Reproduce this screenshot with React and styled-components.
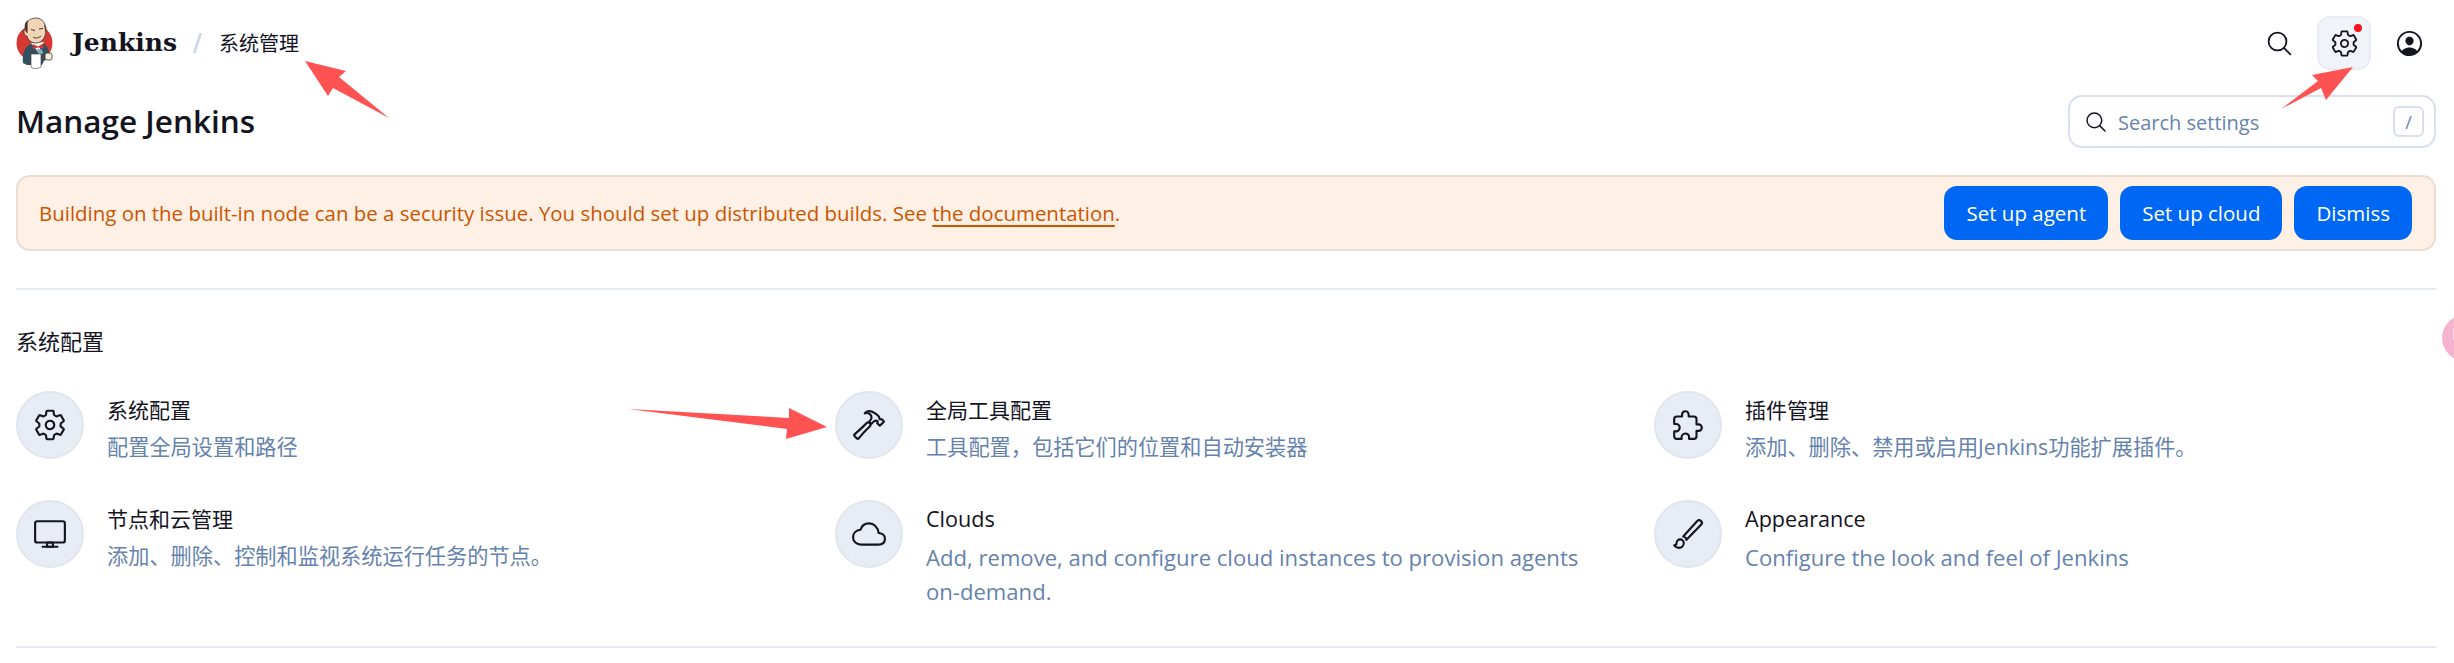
import React from 'react'
import styled, { createGlobalStyle } from 'styled-components'
import {
    IoSearchOutline,
    IoSettingsOutline,
    IoHammerOutline,
    IoCloudOutline,
    IoExtensionPuzzleOutline,
    IoBrushOutline,
    IoPersonCircleOutline
} from 'react-icons/io5'

const sans = `'Open Sans', 'Noto Sans CJK SC', sans-serif`

const GlobalStyle = createGlobalStyle`
    html, body {
        margin: 0;
        background: #ffffff;
        font-family: ${sans};
        color: #14141f;
    }
`

// the io5 desktop icon comes out filled here, so it is drawn by hand
function DesktopIcon({ size }) {
    return (
        <svg width={size} height={size} viewBox="0 0 512 512" fill="none" stroke="currentColor" strokeWidth="32" strokeLinejoin="round" strokeLinecap="round">
            <rect x="32" y="64" width="448" height="320" rx="32" ry="32" />
            <polygon points="304,448 296,384 216,384 208,448" />
            <line x1="368" y1="448" x2="144" y2="448" />
        </svg>
    )
}

const items = [
    { icon: IoSettingsOutline, title: '系统配置', text: '配置全局设置和路径' },
    { icon: IoHammerOutline, title: '全局工具配置', text: '工具配置，包括它们的位置和自动安装器' },
    { icon: IoExtensionPuzzleOutline, title: '插件管理', text: '添加、删除、禁用或启用Jenkins功能扩展插件。' },
    { icon: DesktopIcon, title: '节点和云管理', text: '添加、删除、控制和监视系统运行任务的节点。' },
    { icon: IoCloudOutline, latin: true, title: 'Clouds', text: 'Add, remove, and configure cloud instances to provision agents on-demand.' },
    { icon: IoBrushOutline, latin: true, title: 'Appearance', text: 'Configure the look and feel of Jenkins' }
]

function JenkinsLogo() {
    return (
        <svg width="38" height="52" viewBox="16 16 38 52">
            <circle cx="34.5" cy="42" r="18" fill="#d33833" />
            <path d="M23 62C22 52 25 45 31 43L44 43C48 46 50 50 49 56L44 60L42 64L27 64Z" fill="#335061" />
            <path d="M31 42L44 41L38 51Z" fill="#ffffff" />
            <path d="M26 24C27 19 32 17 36 17C42 17 46 22 46 29C46 36 42 42 36 42C31 42 28 39 27 35C24 35 23 30 25 28Z" fill="#f0d6b7" stroke="#49312a" strokeWidth="0.8" />
            <path d="M25 28C24 24 25 21 28 19C27 23 28 27 27.500 32C26 32 25.500 30 25 28Z" fill="#49312a" />
            <path d="M44 23C46 26 46.500 29 46 32C45 30 44.500 27 44 23Z" fill="#49312a" />
            <path d="M31 28.500L35 29.500M39 28L43 27.500M33 36C35 37.500 38 37.500 41 35" fill="none" stroke="#49312a" strokeWidth="1" />
            <path d="M33 43L38 45.500L43 42.500L43.500 47.500L38 46.500L33 48Z" fill="#d33833" />
            <path d="M37 48L42 48.500L43 52L39 55Z" fill="#81b0c4" />
            <path d="M31 53L41 53L41 66C38 68 33 68 31 66Z" fill="#ffffff" stroke="#49312a" strokeWidth="0.6" />
            <rect x="45" y="52" width="7" height="7" rx="2" fill="#f4ebdd" stroke="#49312a" strokeWidth="0.8" />
        </svg>
    )
}

function Arrows() {
    return (
        <ArrowLayer viewBox="0 0 2454 663">
            <polygon points="305,61 346,71 339,77 389,118 333,88 328,96" fill="#ff5252" />
            <polygon points="2353,67 2326,100 2321,88 2281,109 2318,81 2312,75" fill="#ff5252" />
            <polygon points="827,427 786,439 787,429 628,409 789,418 789,408" fill="#ff5252" />
        </ArrowLayer>
    )
}

export default function App() {
    return (
        <Page>
            <GlobalStyle />
            <TopBar>
                <Brand>
                    <JenkinsLogo />
                    <BrandName>Jenkins</BrandName>
                    <Slash />
                    <Crumb>系统管理</Crumb>
                </Brand>
                <TopActions>
                    <TopButton>
                        <IoSearchOutline size={29} />
                    </TopButton>
                    <TopButton $active>
                        <IoSettingsOutline size={29} />
                        <RedDot />
                    </TopButton>
                    <TopButton>
                        <IoPersonCircleOutline size={31} />
                    </TopButton>
                </TopActions>
            </TopBar>

            <HeaderRow>
                <Heading>Manage Jenkins</Heading>
                <SearchBox>
                    <IoSearchOutline size={24} color="#14141f" />
                    <SearchText>Search settings</SearchText>
                    <KeyHint>/</KeyHint>
                </SearchBox>
            </HeaderRow>

            <Banner>
                <BannerText>
                    Building on the built-in node can be a security issue. You should set up distributed builds. See <BannerLink>the documentation</BannerLink>.
                </BannerText>
                <BannerButtons>
                    <PrimaryButton>Set up agent</PrimaryButton>
                    <PrimaryButton>Set up cloud</PrimaryButton>
                    <PrimaryButton>Dismiss</PrimaryButton>
                </BannerButtons>
            </Banner>

            <Divider />

            <SectionTitle>系统配置</SectionTitle>
            <ItemGrid>
                {items.map((item) => (
                    <Item key={item.title}>
                        <IconCircle>
                            <item.icon size={34} />
                        </IconCircle>
                        <ItemBody>
                            <ItemTitle $latin={item.latin}>{item.title}</ItemTitle>
                            <ItemText $latin={item.latin}>{item.text}</ItemText>
                        </ItemBody>
                    </Item>
                ))}
            </ItemGrid>

            <BottomDivider />
            <PinkBubble />
            <Arrows />
        </Page>
    )
}

const Page = styled.div`
    position: relative;
    height: 663px;
    padding: 16px 18px 0 16px;
    box-sizing: border-box;
    overflow: hidden;
`
const TopBar = styled.div`
    display: flex;
    align-items: center;
    justify-content: space-between;
    height: 54px;
`
const Brand = styled.div`
    display: flex;
    align-items: center;
`
const BrandName = styled.span`
    font-family: 'DejaVu Serif', serif;
    font-weight: 700;
    font-size: 25px;
    margin: 0 0 2px 18px;
`
const Slash = styled.span`
    width: 3px;
    height: 20px;
    margin: 0 20px 0 19px;
    background: #d0d9ea;
    transform: skewX(-18deg);
`
const Crumb = styled.span`
    font-size: 20px;
    margin-bottom: 2px;
`
const TopActions = styled.div`
    display: flex;
    align-items: center;
    gap: 11px;
`
const TopButton = styled.div`
    position: relative;
    display: flex;
    align-items: center;
    justify-content: center;
    width: 54px;
    height: 54px;
    box-sizing: border-box;
    border-radius: 13px;
    background: ${(p) => (p.$active ? '#f0f3f8' : 'transparent')};
    border: 2px solid ${(p) => (p.$active ? '#e9ecf3' : 'transparent')};
`
const RedDot = styled.span`
    position: absolute;
    top: 6px;
    right: 7px;
    width: 8px;
    height: 8px;
    border-radius: 50%;
    background: #f5141e;
`
const HeaderRow = styled.div`
    display: flex;
    align-items: center;
    justify-content: space-between;
    margin-top: 25px;
    height: 53px;
`
const Heading = styled.h1`
    margin: 0 0 2px;
    font-size: 31.5px;
    font-weight: 600;
    color: #14141f;
`
const SearchBox = styled.div`
    display: flex;
    align-items: center;
    box-sizing: border-box;
    width: 368px;
    height: 53px;
    padding: 0 10px 0 14px;
    border: 2px solid #d8dfee;
    border-radius: 14px;
`
const SearchText = styled.span`
    flex: 1;
    margin-left: 10px;
    padding-top: 1px;
    font-size: 20px;
    color: #6583ae;
`
const KeyHint = styled.span`
    display: flex;
    align-items: center;
    justify-content: center;
    box-sizing: border-box;
    width: 31px;
    height: 31px;
    border: 2px solid #d8dfee;
    border-radius: 6px;
    font-size: 18px;
    color: #6583ae;
`
const Banner = styled.div`
    display: flex;
    align-items: center;
    justify-content: space-between;
    box-sizing: border-box;
    height: 76px;
    margin-top: 27px;
    padding: 0 22px 0 21px;
    background: #fff0e6;
    border: 2px solid #eaddd3;
    border-radius: 14px;
`
const BannerText = styled.span`
    font-size: 20.45px;
    color: #cc5500;
`
const BannerLink = styled.span`
    text-decoration: underline;
    text-underline-offset: 4px;
`
const BannerButtons = styled.div`
    display: flex;
    gap: 12px;
`
const PrimaryButton = styled.div`
    display: flex;
    align-items: center;
    height: 54px;
    padding: 0 22px;
    border-radius: 13px;
    background: #0067f4;
    color: #ffffff;
    font-size: 20.5px;
    font-weight: 500;
`
const Divider = styled.div`
    height: 2px;
    margin-top: 37px;
    background: #e4e9f3;
`
const SectionTitle = styled.h2`
    margin: 36px 0 0;
    font-size: 22px;
    line-height: 30px;
    font-weight: 400;
`
const ItemGrid = styled.div`
    display: grid;
    grid-template-columns: repeat(3, 779px);
    column-gap: 40px;
    row-gap: 36px;
    margin-top: 35px;
`
const Item = styled.div`
    display: flex;
    gap: 23px;
`
const IconCircle = styled.div`
    display: flex;
    flex: none;
    align-items: center;
    justify-content: center;
    box-sizing: border-box;
    width: 68px;
    height: 68px;
    border-radius: 50%;
    background: #e8ecf4;
    border: 2px solid #e0e5ee;
`
const ItemBody = styled.div`
    padding-top: 2px;
`
const ItemTitle = styled.div`
    font-size: ${(p) => (p.$latin ? '21.6px' : '21px')};
    line-height: 34px;
`
const ItemText = styled.div`
    margin-top: ${(p) => (p.$latin ? '4px' : '3px')};
    max-width: 670px;
    font-size: ${(p) => (p.$latin ? '22.1px' : '21.2px')};
    line-height: 34px;
    color: #6583ae;
`
const BottomDivider = styled.div`
    height: 2px;
    margin-top: 38px;
    background: #e4e9f3;
`
const PinkBubble = styled.span`
    position: absolute;
    left: 2442px;
    top: 315px;
    width: 46px;
    height: 46px;
    border-radius: 50%;
    background: #f6b3cf;
    &::after {
        content: '';
        position: absolute;
        left: 11px;
        top: 13px;
        width: 4px;
        height: 12px;
        background: #fbdde9;
    }
`
const ArrowLayer = styled.svg`
    position: absolute;
    inset: 0;
    width: 2454px;
    height: 663px;
    pointer-events: none;
`
